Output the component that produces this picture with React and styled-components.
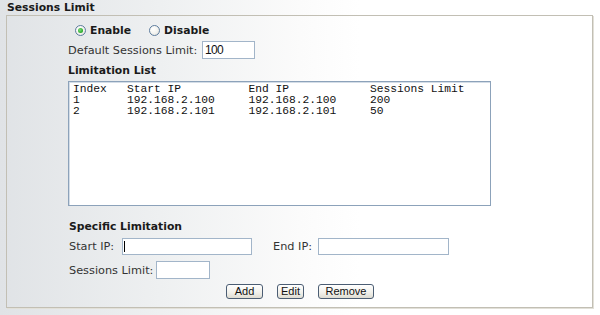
import styled, { createGlobalStyle, css } from 'styled-components';

const GlobalStyle = createGlobalStyle`
  html, body {
    margin: 0;
    padding: 0;
  }
  body {
    width: 600px;
    height: 315px;
    overflow: hidden;
    background: linear-gradient(to right, #e0e3e6 0px, #eef0f1 160px, #fbfbfb 300px, #ffffff 360px);
    font-family: "DejaVu Sans", Verdana, sans-serif;
    color: #222;
  }
`

const Page = styled.div`
  display: flex;
  flex-direction: column;
  width: 600px;
  height: 315px;
`

const Title = styled.div`
  height: 15px;
  line-height: 15px;
  padding-left: 7px;
  font-size: 10.8px;
  font-weight: bold;
  color: #1a1a1a;
`

const Panel = styled.div`
  box-sizing: border-box;
  margin-left: 6px;
  width: 587px;
  height: 293px;
  border: 1px solid #c2bfb4;
  box-shadow: 1px 1px 0 #e2e0d8;
  display: flex;
  flex-direction: column;
`

const Content = styled.div`
  display: flex;
  flex-direction: column;
  padding-left: 61px;
`

const RadioRow = styled.div`
  display: flex;
  align-items: center;
  height: 20px;
  margin-top: 4px;
  padding-left: 7px;
`

const RadioOption = styled.label`
  display: flex;
  align-items: center;
  gap: 4px;
  margin-right: ${p => p.$space || 0}px;
`

const Radio = styled.span`
  box-sizing: border-box;
  width: 11px;
  height: 11px;
  border-radius: 50%;
  border: 1px solid #5d7c9e;
  background: radial-gradient(circle at 35% 35%, #ffffff 0%, #f4f4f0 50%, #dcdcd6 100%);
  display: flex;
  align-items: center;
  justify-content: center;

  ${p => p.$checked && css`
    &::after {
      content: '';
      width: 5px;
      height: 5px;
      border-radius: 50%;
      background: radial-gradient(circle at 40% 40%, #7ce07c 0%, #27a527 70%, #1a8a1a 100%);
    }
  `}
`

const RadioText = styled.span`
  font-size: 10.8px;
  font-weight: bold;
  color: #1a1a1a;
`

const FieldRow = styled.div`
  display: flex;
  align-items: center;
  height: ${p => p.$h || 18}px;
  margin-top: ${p => p.$top || 0}px;
  padding-left: ${p => p.$indent || 0}px;
`

const Label = styled.span`
  flex: none;
  width: ${p => p.$w}px;
  font-size: 11.3px;
  color: #333;
  white-space: nowrap;
`

const InputWrap = styled.div`
  position: relative;
  flex: none;
`

const TextInput = styled.input`
  box-sizing: border-box;
  display: block;
  width: ${p => p.$w}px;
  height: ${p => p.$h || 18}px;
  margin: 0;
  padding: 0 2px;
  border: 1px solid #a2b5c9;
  background: #fff;
  font-family: "Liberation Sans", Arial, sans-serif;
  font-size: 12px;
  letter-spacing: -0.7px;
  color: #111;
  outline: none;
`

const Caret = styled.span`
  position: absolute;
  left: 2px;
  top: 3px;
  width: 1px;
  height: 11px;
  background: #000;
`

const SectionTitle = styled.div`
  height: 18px;
  line-height: 18px;
  margin-top: ${p => p.$top || 0}px;
  padding-left: ${p => p.$indent || 0}px;
  font-size: 10.8px;
  font-weight: bold;
  color: #1a1a1a;
`

const ListBox = styled.div`
  box-sizing: border-box;
  width: 423px;
  height: 125px;
  margin-top: 1px;
  padding: 2px 4px;
  border: 1px solid #8ca2ba;
  box-shadow: inset 1px 1px 0 #d4dde7;
  background: #fff;
`

const ListLine = styled.pre`
  margin: 0;
  font-family: "Liberation Mono", "Courier New", monospace;
  font-size: 11.25px;
  line-height: 10.8px;
  color: #111;
`

const ButtonRow = styled.div`
  display: flex;
  justify-content: center;
  gap: 14px;
  margin-top: 5px;
  padding-left: 1px;
`

const Button = styled.button`
  box-sizing: border-box;
  width: ${p => p.$w}px;
  height: 15px;
  margin: 0;
  padding: 0;
  border: 1px solid #4b5d73;
  border-radius: 3px;
  background: linear-gradient(#ffffff, #f1f0ea 60%, #dedcd2);
  font-family: "Liberation Sans", Arial, sans-serif;
  font-size: 11px;
  line-height: 13px;
  color: #111;
`

const rows = [
  'Index   Start IP          End IP            Sessions Limit',
  '1       192.168.2.100     192.168.2.100     200',
  '2       192.168.2.101     192.168.2.101     50',
]

const App = () => {
  return (
    <Page>
      <GlobalStyle />
      <Title>Sessions Limit</Title>
      <Panel>
        <Content>
          <RadioRow>
            <RadioOption $space={18}>
              <Radio $checked />
              <RadioText>Enable</RadioText>
            </RadioOption>
            <RadioOption>
              <Radio />
              <RadioText>Disable</RadioText>
            </RadioOption>
          </RadioRow>

          <FieldRow $top={1}>
            <Label $w={134}>Default Sessions Limit:</Label>
            <TextInput $w={53} defaultValue="100" />
          </FieldRow>

          <SectionTitle $top={3}>Limitation List</SectionTitle>
          <ListBox>
            {rows.map((r, i) => (
              <ListLine key={i}>{r}</ListLine>
            ))}
          </ListBox>

          <SectionTitle $top={12} $indent={1}>Specific Limitation</SectionTitle>
          <FieldRow $h={17} $top={2} $indent={1}>
            <Label $w={53}>Start IP:</Label>
            <InputWrap>
              <TextInput $w={130} $h={17} />
              <Caret />
            </InputWrap>
            <Label $w={45} style={{ marginLeft: 21 }}>End IP:</Label>
            <TextInput $w={131} $h={17} />
          </FieldRow>
          <FieldRow $top={6} $indent={1}>
            <Label $w={87}>Sessions Limit:</Label>
            <TextInput $w={54} />
          </FieldRow>
        </Content>

        <ButtonRow>
          <Button $w={37}>Add</Button>
          <Button $w={27}>Edit</Button>
          <Button $w={56}>Remove</Button>
        </ButtonRow>
      </Panel>
    </Page>
  );
}

export default App
